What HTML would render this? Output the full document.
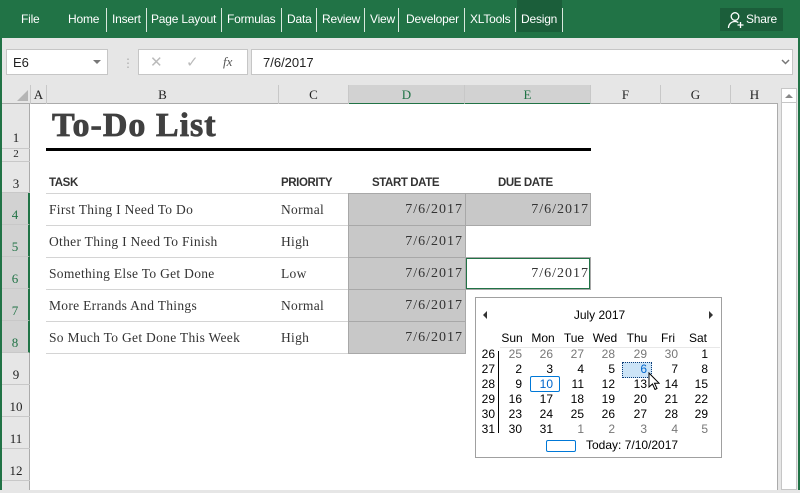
<!DOCTYPE html>
<html><head><meta charset="utf-8">
<style>
*{margin:0;padding:0;box-sizing:border-box}
body{width:800px;height:490px;overflow:hidden;position:relative;background:#e6e6e6;font-family:"Liberation Sans",sans-serif}
.a{position:absolute}
.tab{position:absolute;top:12px;color:#fff;font-size:12px;white-space:nowrap;letter-spacing:-0.2px}
.sep{position:absolute;top:8px;width:1px;height:24px;background:#d8e8dd}
.ser{font-family:"Liberation Serif",serif}
.ch{position:absolute;top:85px;height:19px;border-right:1px solid #c8c8c8;font-family:"Liberation Serif",serif;font-size:13px;text-align:center;line-height:19px;color:#222}
.rh{position:absolute;left:2px;width:28px;border-bottom:1px solid #c8c8c8;font-family:"Liberation Serif",serif;font-size:13px;text-align:center;color:#222}
.task{position:absolute;left:49px;font-family:"Liberation Serif",serif;font-size:13.5px;color:#333;letter-spacing:0.3px}
.pri{position:absolute;left:281px;font-family:"Liberation Serif",serif;font-size:13.5px;color:#333;letter-spacing:0.3px}
.hl{position:absolute;left:46px;width:304px;height:1px;background:#d4d4d4}
.dt{position:absolute;font-family:"Liberation Serif",serif;font-size:14px;color:#333;text-align:right;letter-spacing:1px;line-height:31px;padding-right:2px}
.hd{position:absolute;top:177px;font-size:11.5px;color:#333;font-weight:bold;font-family:"Liberation Sans",sans-serif;letter-spacing:-0.4px}
.cal span{position:absolute;font-size:12px;color:#000;text-align:right;width:20px}
.cal .g{color:#777}
</style></head><body>
<div class="a" style="left:0;top:0;width:800px;height:38px;background:#217346"></div>
<div class="tab" style="left:21px">File</div>
<div class="tab" style="left:68px">Home</div><div class="sep" style="left:106px"></div>
<div class="tab" style="left:112px">Insert</div><div class="sep" style="left:146px"></div>
<div class="tab" style="left:151px">Page Layout</div><div class="sep" style="left:221px"></div>
<div class="tab" style="left:227px">Formulas</div><div class="sep" style="left:281px"></div>
<div class="tab" style="left:287px">Data</div><div class="sep" style="left:316px"></div>
<div class="tab" style="left:322px">Review</div><div class="sep" style="left:364px"></div>
<div class="tab" style="left:370px">View</div><div class="sep" style="left:398px"></div>
<div class="tab" style="left:406px">Developer</div><div class="sep" style="left:464px"></div>
<div class="a" style="left:517px;top:0;width:45px;height:32px;background:#1b5e3a"></div>
<div class="tab" style="left:470px">XLTools</div><div class="sep" style="left:515px"></div>
<div class="tab" style="left:521px">Design</div><div class="sep" style="left:562px"></div>
<div class="a" style="left:720px;top:8px;width:63px;height:23px;background:#1b5e3a"></div>
<svg class="a" style="left:727px;top:11px" width="18" height="18" viewBox="0 0 18 18" fill="none" stroke="#fff" stroke-width="1.3"><circle cx="8" cy="5.5" r="3.8"/><path d="M1.5 17c0-4 3-6.5 6.5-6.5 1.5 0 2.5.4 3.3 1"/><path d="M13.5 11v6M10.5 14h6"/></svg>
<div class="tab" style="left:746px;top:12px">Share</div>
<div class="a" style="left:0;top:38px;width:2px;height:452px;background:#217346"></div>
<div class="a" style="left:798px;top:38px;width:2px;height:452px;background:#217346"></div>
<!-- formula bar -->
<div class="a" style="left:6px;top:49px;width:102px;height:26px;background:#fff;border:1px solid #c6c6c6"></div>
<div class="a" style="left:13px;top:55px;font-size:13px;color:#222">E6</div>
<div class="a" style="left:93px;top:60px;width:0;height:0;border-left:4px solid transparent;border-right:4px solid transparent;border-top:4px solid #777"></div>
<div class="a" style="left:122px;top:56px;color:#aaa;font-size:12px">⋮</div>
<div class="a" style="left:138px;top:49px;width:110px;height:26px;background:#fff;border:1px solid #c6c6c6"></div>
<div class="a" style="left:150px;top:53px;color:#bbb;font-size:15px">✕</div>
<div class="a" style="left:186px;top:53px;color:#bbb;font-size:15px">✓</div>
<div class="a ser" style="left:223px;top:54px;color:#555;font-size:13px;font-style:italic">fx</div>
<div class="a" style="left:251px;top:49px;width:542px;height:26px;background:#fff;border:1px solid #c6c6c6"></div>
<div class="a" style="left:263px;top:55px;font-size:13px;color:#222">7/6/2017</div>
<svg class="a" style="left:781px;top:59px" width="9" height="6" viewBox="0 0 9 6"><path d="M1 1l3.5 3.5L8 1" fill="none" stroke="#777" stroke-width="1.5"/></svg>
<!-- headers -->
<div class="a" style="left:2px;top:85px;width:776px;height:19px;background:#e6e6e6;border-bottom:1px solid #ababab"></div>
<div class="a" style="left:17px;top:90px;width:0;height:0;border-left:11px solid transparent;border-bottom:11px solid #b5b5b5"></div>
<div class="ch" style="left:30px;width:17px;border-left:1px solid #c8c8c8">A</div>
<div class="ch" style="left:47px;width:232px">B</div>
<div class="ch" style="left:279px;width:70px">C</div>
<div class="ch" style="left:349px;width:116px;background:#d2d2d2;color:#217346;border-bottom:2px solid #217346;height:20px">D</div>
<div class="ch" style="left:465px;width:126px;background:#d2d2d2;color:#217346;border-bottom:2px solid #217346;height:20px">E</div>
<div class="ch" style="left:591px;width:70px">F</div>
<div class="ch" style="left:661px;width:70px">G</div>
<div class="ch" style="left:731px;width:47px;border-right:none">H</div>
<!-- sheet -->
<div class="a" style="left:30px;top:104px;width:748px;height:386px;background:#fff;border-right:1px solid #ababab"></div>
<div class="a" style="left:2px;top:104px;width:28px;height:386px;background:#e6e6e6;border-right:1px solid #ababab"></div>
<div class="a" style="left:781px;top:88px;width:16px;height:402px;background:#fff;border:1px solid #c6c6c6"></div>
<div class="a" style="left:785px;top:94px;width:0;height:0;border-left:4px solid transparent;border-right:4px solid transparent;border-bottom:4px solid #888"></div>
<div class="a" style="left:781px;top:102px;width:16px;height:1px;background:#c6c6c6"></div>
<div class="rh" style="top:104px;height:45px;line-height:68px">1</div>
<div class="rh" style="top:149px;height:13px;line-height:10px;font-size:11px">2</div>
<div class="rh" style="top:162px;height:31px;line-height:43px">3</div>
<div class="rh" style="top:193px;height:32px;line-height:44px;background:#d2d2d2;color:#217346;border-right:2px solid #217346">4</div>
<div class="rh" style="top:225px;height:32px;line-height:44px;background:#d2d2d2;color:#217346;border-right:2px solid #217346">5</div>
<div class="rh" style="top:257px;height:32px;line-height:44px;background:#d2d2d2;color:#217346;border-right:2px solid #217346">6</div>
<div class="rh" style="top:289px;height:32px;line-height:44px;background:#d2d2d2;color:#217346;border-right:2px solid #217346">7</div>
<div class="rh" style="top:321px;height:32px;line-height:44px;background:#d2d2d2;color:#217346;border-right:2px solid #217346">8</div>
<div class="rh" style="top:353px;height:32px;line-height:44px">9</div>
<div class="rh" style="top:385px;height:32px;line-height:44px">10</div>
<div class="rh" style="top:417px;height:32px;line-height:44px">11</div>
<div class="rh" style="top:449px;height:32px;line-height:44px">12</div>
<div class="a ser" style="left:52px;top:107px;font-size:34px;font-weight:bold;color:#404040;letter-spacing:1px;-webkit-text-stroke:0.8px #404040">To-Do List</div>
<div class="a" style="left:46px;top:148px;width:545px;height:3px;background:#000"></div>
<div class="hd" style="left:49px">TASK</div>
<div class="hd" style="left:281px">PRIORITY</div>
<div class="hd" style="left:372px">START DATE</div>
<div class="hd" style="left:498px">DUE DATE</div>
<div class="hl" style="top:193px"></div><div class="hl" style="top:225px"></div><div class="hl" style="top:257px"></div><div class="hl" style="top:289px"></div><div class="hl" style="top:321px"></div><div class="hl" style="top:353px"></div>
<div class="task" style="top:202px">First Thing I Need To Do</div><div class="pri" style="top:202px">Normal</div>
<div class="task" style="top:234px">Other Thing I Need To Finish</div><div class="pri" style="top:234px">High</div>
<div class="task" style="top:266px">Something Else To Get Done</div><div class="pri" style="top:266px">Low</div>
<div class="task" style="top:298px">More Errands And Things</div><div class="pri" style="top:298px">Normal</div>
<div class="task" style="top:330px">So Much To Get Done This Week</div><div class="pri" style="top:330px">High</div>
<div class="a" style="left:348px;top:193px;width:118px;height:161px;background:#c8c8c8;border:1px solid #a8a8a8"></div>
<div class="a" style="left:349px;top:225px;width:116px;height:1px;background:#a8a8a8"></div>
<div class="a" style="left:349px;top:257px;width:116px;height:1px;background:#a8a8a8"></div>
<div class="a" style="left:349px;top:289px;width:116px;height:1px;background:#a8a8a8"></div>
<div class="a" style="left:349px;top:321px;width:116px;height:1px;background:#a8a8a8"></div>
<div class="dt" style="left:349px;top:194px;width:116px">7/6/2017</div>
<div class="dt" style="left:349px;top:226px;width:116px">7/6/2017</div>
<div class="dt" style="left:349px;top:258px;width:116px">7/6/2017</div>
<div class="dt" style="left:349px;top:290px;width:116px">7/6/2017</div>
<div class="dt" style="left:349px;top:322px;width:116px">7/6/2017</div>
<div class="a" style="left:465px;top:193px;width:126px;height:33px;background:#c8c8c8;border:1px solid #a8a8a8"></div>
<div class="dt" style="left:465px;top:194px;width:126px">7/6/2017</div>
<div class="a" style="left:465px;top:257px;width:126px;height:33px;border:1px solid #a8a8a8"></div>
<div class="a" style="left:466px;top:258px;width:124px;height:31px;border:1px solid #217346"></div>
<div class="dt" style="left:465px;top:258px;width:126px">7/6/2017</div>
<!-- calendar -->
<div class="a cal" style="left:475px;top:297px;width:247px;height:161px;background:#fff;border:1px solid #a0a0a0">
<div class="a" style="left:7px;top:13px;width:0;height:0;border-top:4px solid transparent;border-bottom:4px solid transparent;border-right:4px solid #333"></div>
<div class="a" style="left:233px;top:13px;width:0;height:0;border-top:4px solid transparent;border-bottom:4px solid transparent;border-left:4px solid #333"></div>
<div class="a" style="left:0;top:10px;width:247px;text-align:center;font-size:12px">July 2017</div>
<div class="a" style="left:24px;top:49px;width:220px;height:1px;background:#e8e8e8"></div>
<div class="a" style="left:22px;top:53px;width:1px;height:82px;background:#000"></div>
<div class="a" style="left:146px;top:64px;width:30px;height:16px;background:#cce4f7;border:1px dotted #0a3c78"></div>
<div class="a" style="left:54px;top:78px;width:30px;height:16px;border:1px solid #0078d7;border-radius:2px"></div>
<div class="a" style="left:70px;top:142px;width:30px;height:12px;border:1px solid #0078d7;border-radius:2px"></div>
<div class="a" style="left:110px;top:140px;font-size:12px">Today: 7/10/2017</div>
<div id="c"></div>
<svg class="a" style="left:172px;top:74px" width="12" height="18" viewBox="0 0 12 18"><path d="M1 1v14l3.5-3 2.5 5.5 2-1-2.5-5.3H11z" fill="#fff" stroke="#000" stroke-width="1"/></svg>
</div>
<script>
var c=document.getElementById('c'),h='';
var days=['Sun','Mon','Tue','Wed','Thu','Fri','Sat'],xs=[37,68,99,130,162,193,223];
days.forEach(function(d,i){h+='<span style="left:'+(xs[i]-16)+'px;top:33px;width:30px;text-align:center">'+d+'</span>';});
var wk=[26,27,28,29,30,31];
var rows=[[25,26,27,28,29,30,1],[2,3,4,5,6,7,8],[9,10,11,12,13,14,15],[16,17,18,19,20,21,22],[23,24,25,26,27,28,29],[30,31,1,2,3,4,5]];
rows.forEach(function(r,ri){var t=49+ri*15;h+='<span style="left:-1px;top:'+t+'px">'+wk[ri]+'</span>';
r.forEach(function(n,i){var g=(ri==0&&n>20)||(ri==5&&n<10);var col=(ri==1&&i==4)||(ri==2&&i==1)?' style="color:#0066cc;':' style="';
h+='<span class="'+(g?'g':'')+'"'+col+'left:'+(xs[i]-11)+'px;top:'+t+'px">'+n+'</span>';});});
c.innerHTML=h;
</script>
</body></html>
